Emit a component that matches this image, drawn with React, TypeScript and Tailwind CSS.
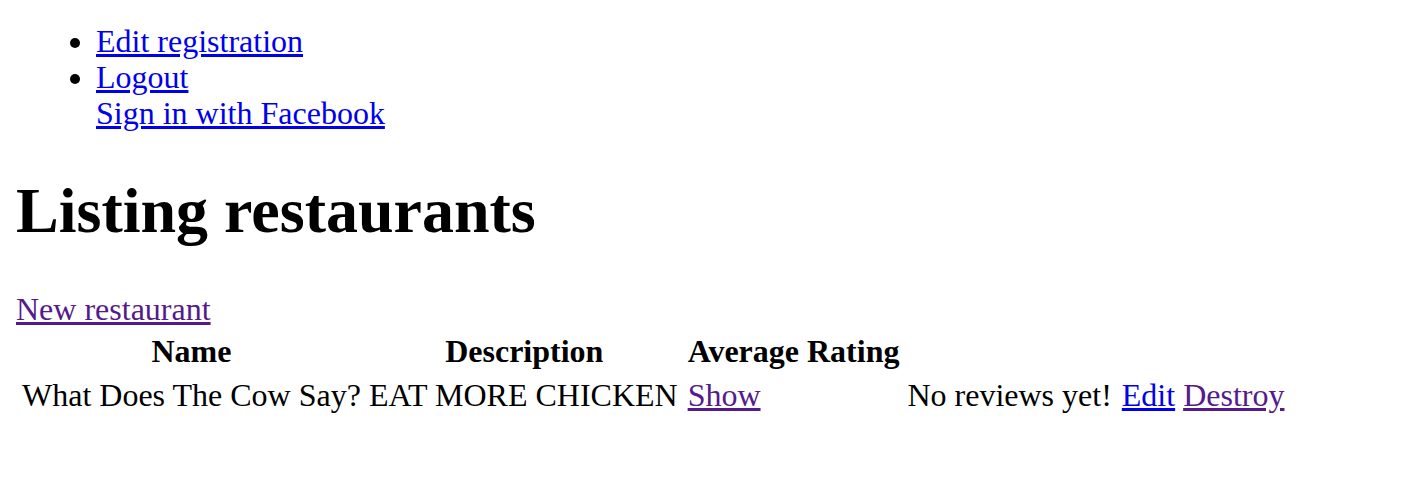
const linkBlue = 'text-[#0000EE] underline';
const linkVisited = 'text-[#551A8B] underline';

const restaurants = [
  { name: 'What Does The Cow Say?', description: 'EAT MORE CHICKEN', rating: 'No reviews yet!' }
];

export default function App() {
  return (
    <div className="min-h-screen bg-white px-4 pt-[23px] font-['Liberation_Serif',serif] text-[32px] leading-[36px] text-black">
      <ul className="list-disc pl-[80px]">
        <li>
          <a href="#" className={linkBlue}>Edit registration</a>
        </li>
        <li>
          <a href="#" className={linkBlue}>Logout</a>
        </li>
      </ul>
      <div className="pl-[80px]">
        <a href="#" className={linkBlue}>Sign in with Facebook</a>
      </div>

      <h1 className="my-[43px] text-[64px] font-bold leading-[74px]">Listing restaurants</h1>

      <div>
        <a href="#" className={linkVisited}>New restaurant</a>
      </div>

      <table className="border-separate border-spacing-[4px]">
        <thead>
          <tr>
            <th className="p-[2px] text-center font-bold">Name</th>
            <th className="p-[2px] text-center font-bold">Description</th>
            <th className="p-[2px] text-center font-bold">Average Rating</th>
            <th colSpan={3}></th>
          </tr>
        </thead>
        <tbody>
          {restaurants.map((r) => (
            <tr key={r.name}>
              <td className="p-[2px]">{r.name}</td>
              <td className="p-[2px] pr-[4px]">{r.description}</td>
              <td className="p-[2px]">
                <a href="#" className={linkVisited}>Show</a>
              </td>
              <td className="p-[2px] pr-[4px]">{r.rating}</td>
              <td className="p-[2px]">
                <a href="#" className={linkBlue}>Edit</a>
              </td>
              <td className="p-[2px]">
                <a href="#" className={linkVisited}>Destroy</a>
              </td>
            </tr>
          ))}
        </tbody>
      </table>
    </div>
  );
}
